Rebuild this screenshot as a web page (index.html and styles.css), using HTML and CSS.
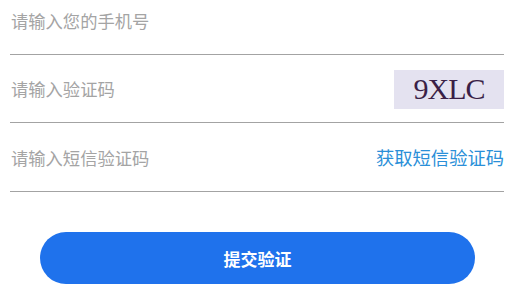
FILE: index.html
```html
<!DOCTYPE html>
<html lang="zh-CN">
<head>
<meta charset="utf-8">
<link rel="stylesheet" href="styles.css">
</head>
<body>
<form class="form">
  <div class="row row-first">
    <span class="placeholder">请输入您的手机号</span>
  </div>
  <div class="row">
    <span class="placeholder">请输入验证码</span>
    <span class="captcha">9XLC</span>
  </div>
  <div class="row row-last">
    <span class="placeholder">请输入短信验证码</span>
    <a class="sms-link">获取短信验证码</a>
  </div>
  <div class="actions">
    <button type="button" class="submit">提交验证</button>
  </div>
</form>
</body>
</html>
```
FILE: styles.css
```css
html, body {
  margin: 0;
  padding: 0;
  background: #ffffff;
  overflow: hidden;
}
body {
  font-family: "Noto Sans CJK SC", "Noto Sans", sans-serif;
}
.form {
  padding: 0 18px 0 10px;
}
.row {
  height: 68px;
  box-sizing: border-box;
  border-bottom: 1px solid #a3a3a3;
  display: flex;
  align-items: center;
  justify-content: space-between;
}
.row-first {
  margin-top: -13px;
}
.row-last {
  height: 69px;
}
.placeholder {
  padding-left: 1px;
  font-size: 17.3px;
  color: #a4a4a4;
}
.captcha {
  width: 110px;
  height: 39px;
  background: #e4e2f0;
  display: flex;
  align-items: center;
  justify-content: center;
  font-family: "Liberation Serif", "Times New Roman", serif;
  font-size: 30px;
  letter-spacing: -1px;
  color: #3a1f47;
  margin-top: 1px;
}
.sms-link {
  font-size: 18.3px;
  color: #2a8fd8;
  text-decoration: none;
}
.actions {
  padding: 40px 29px 0 30px;
}
.submit {
  display: block;
  width: 100%;
  height: 52px;
  border: none;
  border-radius: 26px;
  background: #1f72ec;
  color: #ffffff;
  font-family: "Noto Sans CJK SC", "Noto Sans", sans-serif;
  font-size: 17px;
  font-weight: bold;
  padding: 0;
}
```
